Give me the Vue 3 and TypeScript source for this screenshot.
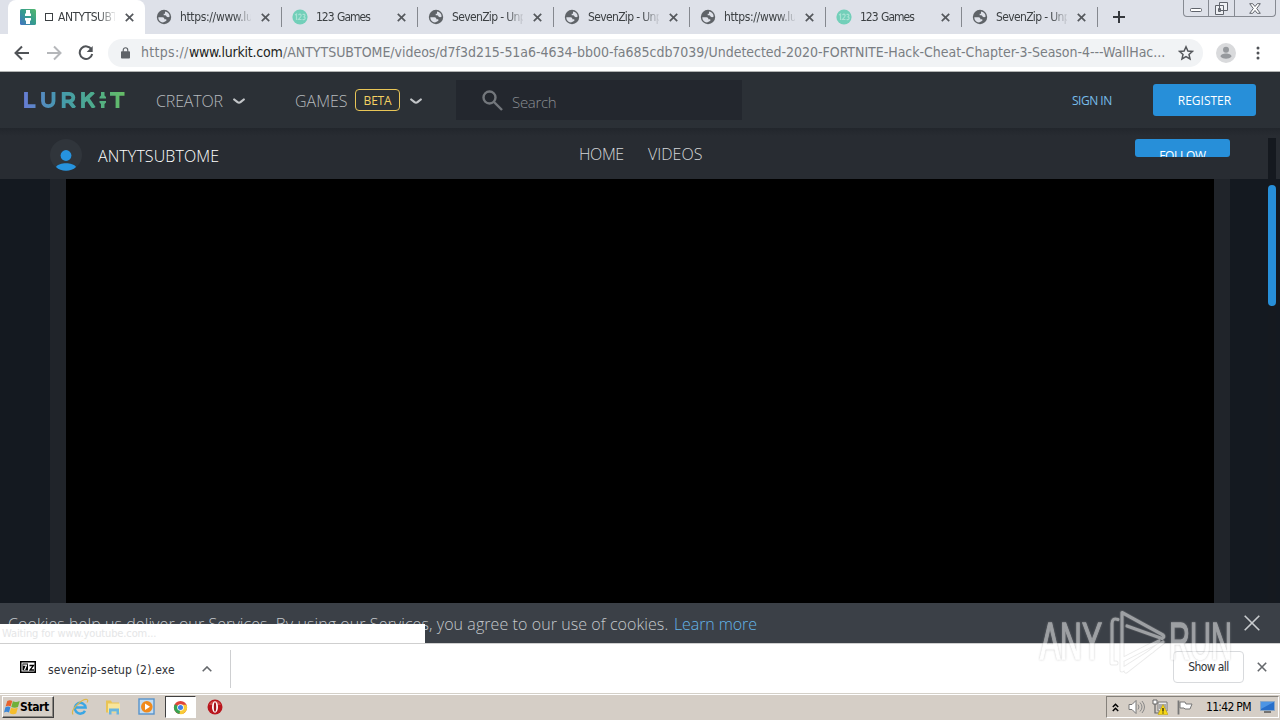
<template>
  <div class="desktop">
    <div class="tab-strip">
      <div v-for="(tab, i) in tabs" :key="i" class="tab" :class="[tab.kind, { active: i === 0 }]">
        <svg v-if="tab.icon === 'lurkit'" class="favicon" viewBox="0 0 16 16">
          <defs>
            <linearGradient id="fav" x1="0" y1="1" x2="1" y2="0">
              <stop offset="0" stop-color="#4472c4" />
              <stop offset=".5" stop-color="#369c8e" />
              <stop offset="1" stop-color="#54b86c" />
            </linearGradient>
          </defs>
          <rect width="16" height="16" rx="1.5" fill="url(#fav)" />
          <path d="M6 1h4v3l1 1v2H5V5l1-1zM5 9h6v2l-1 1v3H6v-3l-1-1z" fill="#fff" />
        </svg>
        <svg v-else-if="tab.icon === 'globe'" class="favicon" viewBox="0 0 16 16">
          <circle cx="8" cy="8" r="7.200" fill="#5f6368" />
          <path d="M2.300 8.300h4.200c1.500.2 2 1 1.800 2h2v1.700c-1.500.3-1.800 1-3.300 1.500C4 13.200 2.200 11 2.300 8.300z" fill="#dee1e9" />
          <path d="M9 2.500c2.500.3 4.500 2.300 4.700 5-1 .9-2 .9-3 .3-.5-1.300-1.200-1.600-3-1.500V4.800H9z" fill="#dee1e9" />
        </svg>
        <svg v-else class="favicon" viewBox="0 0 16 16">
          <circle cx="8" cy="8" r="7.600" fill="#72cfb9" />
          <path d="M3 6l1.500-1v6M6.500 6c2-2 3.500 0 2 2l-2 2.500h3M10.500 5.500c3-1 3 2 1 2.300 2.500.2 2 3.500-1 2.700" fill="none" stroke="#a9e2d4" stroke-width="1.200" />
        </svg>
        <span class="tab-title"><i v-if="i === 0" class="box-glyph"></i>{{ tab.title }}</span>
        <svg class="tab-close" viewBox="0 0 8 8"><path d="M.7.7l6.600 6.600M7.300.7L.7 7.300" /></svg>
      </div>
      <svg class="new-tab" viewBox="0 0 12 12"><path d="M6 0v12M0 6h12" /></svg>
      <div class="window-buttons">
        <span class="win-btn"><svg width="13" height="6" viewBox="0 0 13 6"><rect x=".5" y="1.500" width="11" height="3" rx="1" fill="#fff" stroke="#60646c" /></svg></span>
        <span class="win-btn"><svg width="13" height="13" viewBox="0 0 13 13"><path d="M4.500.5h8v8h-8zM.5 3.500h8v9h-8zM3.500 6.500h2v3h-2z" fill="#eef0f4" stroke="#60646c" /></svg></span>
        <span class="win-btn wide"><svg width="12" height="11" viewBox="0 0 12 11"><path d="M.7.7h3L6 3.500 8.300.7h3L7.700 5.500l3.600 4.800h-3L6 7.500l-2.300 2.800h-3l3.600-4.800z" fill="#fff" stroke="#60646c" /></svg></span>
      </div>
    </div>

    <div class="toolbar">
      <svg class="nav-icon" viewBox="0 0 16 16"><path d="M15 8H2M8 1.500L1.500 8 8 14.500" /></svg>
      <svg class="nav-icon dim" viewBox="0 0 16 16"><path d="M1 8h13M8 1.500L14.500 8 8 14.500" /></svg>
      <svg class="nav-icon" viewBox="0 0 16 16"><path d="M13.500 4.500A6.300 6.300 0 1 0 14.200 9" /><path d="M14.700 1v6h-6z" class="solid" /></svg>
      <div class="omnibox">
        <svg class="lock" viewBox="0 0 10 13"><rect y="4.500" width="10" height="8" rx="1" fill="#5f6368" /><path d="M2.500 5V3.200a2.500 2.500 0 0 1 5 0V5" fill="none" stroke="#5f6368" stroke-width="1.300" /></svg>
        <div class="url">
          <span class="scheme">https://</span><span class="host">www.lurkit.com</span><span class="path">{{ urlPath }}</span>
        </div>
        <svg class="star" viewBox="0 0 16 16"><path d="M8 1.800l1.900 4.200 4.500.4-3.400 3 1 4.500L8 11.500l-4 2.400 1-4.500-3.400-3 4.500-.4z" /></svg>
      </div>
      <svg class="avatar" viewBox="0 0 20 20"><circle cx="10" cy="10" r="10" fill="#d9dadc" /><circle cx="10" cy="6.800" r="3" fill="#96999d" /><path d="M4.500 13.500c0-4 11-4 11 0-2.500 3-8.500 3-11 0z" fill="#96999d" /></svg>
      <svg class="kebab" viewBox="0 0 4 14"><circle cx="2" cy="2" r="1.500" /><circle cx="2" cy="7" r="1.500" /><circle cx="2" cy="12" r="1.500" /></svg>
    </div>

    <div class="page">
      <header class="site-header">
        <svg class="logo" viewBox="0 0 101 16">
          <defs>
            <linearGradient id="brand" gradientUnits="userSpaceOnUse" x1="0" y1="0" x2="101" y2="0">
              <stop offset="0" stop-color="#667dd4" />
              <stop offset=".35" stop-color="#4499ad" />
              <stop offset=".7" stop-color="#4eac8b" />
              <stop offset="1" stop-color="#66bd65" />
            </linearGradient>
          </defs>
          <g fill="none" stroke="url(#brand)" stroke-width="3.800">
            <path d="M2 0v14.100h9.500" />
            <path d="M19 0v9c0 6.800 10.500 6.800 10.500 0V0" />
            <path d="M39.700 16V1.900h5.500c5.500 0 5.500 7.400 0 7.400h-5.500M45 9l5.500 7" />
            <path d="M59 0v16M69.500 0L60 9M63.500 6.500L70 16" />
            <path d="M86 1.900h14.500M93.500 1v15" />
          </g>
          <path d="M77 0h3.500v3.500l1.500 1.500v1.500h-6.500V5L77 3.500zM75.500 9H82v1.500L80.500 12v4H77v-4l-1.500-1.500z" fill="url(#brand)" />
        </svg>
        <span class="menu creator">CREATOR</span>
        <svg class="chevron" viewBox="0 0 12 7"><path d="M1.200 1.500L4.500 4.200q1.500 1 3 0l3.300-2.700" /></svg>
        <span class="menu games">GAMES</span>
        <span class="beta">BETA</span>
        <svg class="chevron" viewBox="0 0 12 7"><path d="M1.200 1.500L4.500 4.200q1.500 1 3 0l3.300-2.700" /></svg>
        <div class="search">
          <svg class="search-icon" viewBox="0 0 21 21"><circle cx="7.500" cy="7.500" r="6" /><path d="M12 12l8 8" /></svg>
          <span>Search</span>
        </div>
        <span class="sign-in">SIGN IN</span>
        <span class="register">REGISTER</span>
      </header>

      <div class="channel-bar">
        <svg class="channel-avatar" viewBox="0 0 32 32">
          <circle cx="16" cy="16" r="16" fill="#30353b" />
          <circle cx="16" cy="16.500" r="5.400" fill="#2693de" />
          <path d="M6 28c3-5 17-5 20 0-5 5-15 5-20 0z" fill="#2693de" />
        </svg>
        <span class="channel-name">ANTYTSUBTOME</span>
        <nav class="channel-nav"><span class="home">HOME</span><span class="videos">VIDEOS</span></nav>
        <span class="follow">FOLLOW</span>
      </div>

      <main class="content">
        <div class="player"></div>
      </main>

      <div class="cookie-bar">
        <span class="cookie-text">Cookies help us deliver our Services. By using our Services, you agree to our use of cookies.</span>
        <span class="learn">Learn more</span>
        <svg class="cookie-close" viewBox="0 0 16 16"><path d="M.7.7l14.600 14.600M15.300.7L.7 15.300" /></svg>
      </div>

      <div class="scroll-track"><div class="scroll-thumb"></div></div>
      <div class="status-bubble"><span>Waiting for www.youtube.com...</span></div>
    </div>

    <div class="downloads">
      <svg class="file-icon" viewBox="0 0 16 12"><rect x=".75" y=".75" width="14.500" height="10.500" fill="#fff" stroke="#000" stroke-width="1.500" /><path d="M2.500 2.500h5.500v7H2.500z" /><path d="M3.200 4.200h3.300L4.500 9" fill="none" stroke="#fff" stroke-width="1.200" /><path d="M9.500 4.500h4L10 9h4" fill="none" stroke="#000" stroke-width="1.300" /></svg>
      <span class="file-name">sevenzip-setup (2).exe</span>
      <svg class="file-arrow" viewBox="0 0 10 6"><path d="M.7 5.300L5 1l4.300 4.300" /></svg>
      <span class="shelf-line"></span>
      <span class="show-all">Show all</span>
      <svg class="shelf-close" viewBox="0 0 10 10"><path d="M.8.8l8.400 8.400M9.200.8L.8 9.200" /></svg>
    </div>

    <div class="taskbar">
      <div class="start">
        <svg viewBox="0 0 16 16">
          <path d="M3.300 2c2-1.300 3.500-1 5 0L6.600 7.500c-2-1-3-1-5 0z" fill="#e8622c" />
          <path d="M8.900 2.300c2 1 4 1 6.800-.2L14 8c-2 1-4.500 1-6.700 0z" fill="#70b03a" />
          <path d="M1.400 8.200c2-1 3.300-1 5 0L5 13.500c-2-1-3-1-5 0z" fill="#3d87d6" />
          <path d="M7.100 8.700c2 1 4 1 6.700 0L12.200 14.500c-2 1-4.500 1-6.700-.5z" fill="#f5bd2c" />
        </svg>
        <span>Start</span>
      </div>
      <svg class="quick ie" viewBox="0 0 18 18">
        <path d="M14 12.800A5.400 5.400 0 1 1 14.600 9.600H5" fill="none" stroke="#3aa6e4" stroke-width="2.500" />
        <path d="M2 16.500C-1 12 11 .5 16 1.500c1.200.5.800 1.800 0 3" fill="none" stroke="#dcb74a" stroke-width="1.200" />
      </svg>
      <svg class="quick folder" viewBox="0 0 18 18">
        <path d="M2 2.500h5l1 2h7v10H2z" fill="#e9c455" />
        <path d="M4 5.500h12v9H4z" fill="#f8e59a" />
        <path d="M5 16.500v-6h10v6h-2.500v-3h-5v3z" fill="#68b5df" />
      </svg>
      <svg class="quick media" viewBox="0 0 18 18">
        <rect x="1" y="1" width="15" height="15" fill="#c2dcf2" stroke="#5793cb" stroke-width="1.400" />
        <circle cx="8.800" cy="8.800" r="5.800" fill="#f08a1c" />
        <path d="M7 5.500l5 3.300-5 3.300z" fill="#fff" />
      </svg>
      <div class="running">
        <svg viewBox="0 0 16 16">
          <circle cx="8" cy="8" r="7" fill="#e0443a" />
          <path d="M8 8L2 4.400A7 7 0 0 0 7 15l3-5z" fill="#36a351" />
          <path d="M8 8l-1 7A7 7 0 0 0 14.300 5H8z" fill="#f8cb38" />
          <circle cx="8" cy="8" r="3.500" fill="#fff" />
          <circle cx="8" cy="8" r="2.700" fill="#3f80e8" />
        </svg>
      </div>
      <svg class="quick opera" viewBox="0 0 16 16">
        <circle cx="8" cy="8" r="7.500" fill="#b9161d" />
        <path d="M2 6a6.500 6.500 0 0 1 12 0" fill="#d04a48" />
        <ellipse cx="8" cy="8" rx="3" ry="5.800" fill="#fff" />
        <ellipse cx="8" cy="8" rx="1.200" ry="4.800" fill="#a3141a" />
      </svg>
      <div class="tray">
        <svg class="more" viewBox="0 0 7 9"><path d="M.8 4l2.700-2.700L6.200 4M.8 8l2.700-2.700L6.200 8" fill="none" stroke="#000" stroke-width="1.500" /></svg>
        <svg class="volume" viewBox="0 0 17 14"><path d="M1 4.500h3l4-4v13l-4-4H1z" fill="#fff" stroke="#777" /><path d="M10 4.500q2 2.500 0 5M12 2.500q4 4.500 0 9M14 1q5 6 0 12" fill="none" stroke="#888" /></svg>
        <svg class="network" viewBox="0 0 16 16"><path d="M6 3h9v9H6z" fill="#ededed" stroke="#777" /><path d="M7 5h7v5H7z" fill="#aaa" /><path d="M1 1h4v4H1z" fill="#fff" stroke="#666" /><path d="M3 5v9h4" fill="none" stroke="#666" stroke-width="1.200" /><path d="M11 5.500l5 10H6z" fill="#f7d714" stroke="#bd9d00" stroke-width=".5" /><path d="M11 9v3.500M11 13.500v1" stroke="#111" stroke-width="1.200" /></svg>
        <svg class="flag" viewBox="0 0 16 15"><path d="M1.500.5v14" stroke="#777" stroke-width="1.800" /><path d="M3 2h5l1 2h6l-2 5H8L7 8H3z" fill="#fff" stroke="#777" /></svg>
        <span class="clock">11:42 PM</span>
        <svg class="screen" viewBox="0 0 15 12"><path d="M.5.5h14v9H.5z" fill="#286fca" stroke="#8aa7c6" /><path d="M1 1h13L1 8z" fill="#4d95e4" /><path d="M4 11h7" stroke="#555" stroke-width="1.500" /></svg>
      </div>
    </div>

    <svg class="watermark" viewBox="0 0 200 66">
      <g class="mark-text">
        <text x="2" y="51" textLength="62" lengthAdjust="spacingAndGlyphs">ANY</text>
        <text x="131" y="51" textLength="63" lengthAdjust="spacingAndGlyphs">RUN</text>
      </g>
      <g class="mark-play">
        <path v-for="layer in ['edge', 'face']" :key="layer" :class="layer" d="M80 11.500q-6-2-6 4V55h4M84 53V4.500L125 27q2 2-1 3.500L89 18M84 52l37-19M88 63l37-29M84 53v9l30-19" />
      </g>
    </svg>
  </div>
</template>

<script setup lang="ts">
interface Tab {
  title: string
  icon: 'lurkit' | 'globe' | 'games'
  kind: string
}

const tabs: Tab[] = [
  { title: 'ANTYTSUBTOME', icon: 'lurkit', kind: 'channel' },
  { title: 'https://www.lurkit.com', icon: 'globe', kind: 'link' },
  { title: '123 Games', icon: 'games', kind: 'games-tab' },
  { title: 'SevenZip - Unpack', icon: 'globe', kind: 'zip' },
  { title: 'SevenZip - Unpack', icon: 'globe', kind: 'zip' },
  { title: 'https://www.lurkit.com', icon: 'globe', kind: 'link' },
  { title: '123 Games', icon: 'games', kind: 'games-tab' },
  { title: 'SevenZip - Unpack', icon: 'globe', kind: 'zip' },
]

const urlPath =
  '/ANTYTSUBTOME/videos/d7f3d215-51a6-4634-bb00-fa685cdb7039/Undetected-2020-FORTNITE-Hack-Cheat-Chapter-3-Season-4---WallHac...'
</script>

<style>
body {
  margin: 0;
  overflow: hidden;
}
</style>

<style scoped>
.desktop {
  position: relative;
  display: flex;
  flex-direction: column;
  width: 1280px;
  height: 720px;
  overflow: hidden;
  font-family: "DejaVu Sans Condensed", "DejaVu Sans", sans-serif;
  font-stretch: condensed;
  background: #fff;
}
svg {
  display: block;
  flex: none;
}
span {
  white-space: nowrap;
}
.tab-strip {
  display: flex;
  height: 34px;
  flex: none;
  padding-left: 8px;
  background: #dee1e9;
}
.tab {
  box-sizing: border-box;
  display: flex;
  align-items: center;
  width: 136px;
  height: 34px;
  padding-left: 12px;
  flex: none;
  font-size: 12px;
  color: #3c4043;
}
.tab.active {
  width: 137px;
  margin-right: -1px;
  background: #fff;
  border-radius: 8px 8px 0 0;
}
.tab:not(.active)::after {
  content: "";
  flex: none;
  width: 1px;
  height: 20px;
  margin-left: 11px;
  background: #85888f;
}
.favicon {
  width: 16px;
  height: 16px;
}
.tab-title {
  flex: none;
  width: 71px;
  margin: 0 8px;
  overflow: hidden;
  letter-spacing: -0.35px;
  -webkit-mask-image: linear-gradient(90deg, #000 54px, transparent 73px);
  mask-image: linear-gradient(90deg, #000 54px, transparent 73px);
}
.zip .tab-title {
  letter-spacing: -0.65px;
}
.games-tab .tab-title {
  letter-spacing: -1px;
  word-spacing: 1px;
}
.channel .tab-title {
  letter-spacing: -0.5px;
}
.box-glyph {
  display: inline-block;
  width: 6px;
  height: 6px;
  margin: 0 5px 0 1px;
  border: 1px solid #3c4043;
}
.tab-close {
  width: 9px;
  height: 9px;
  margin-left: 2px;
}
.tab-close path {
  stroke: #55585d;
  stroke-width: 1.5;
}
.new-tab {
  width: 12px;
  height: 12px;
  margin: 11px 0 0 17px;
}
.new-tab path {
  stroke: #35383d;
  stroke-width: 2;
}
.window-buttons {
  box-sizing: border-box;
  display: flex;
  width: 93px;
  height: 17px;
  margin-left: 58px;
  border: 1px solid #868a92;
  border-top: 0;
  border-radius: 0 0 4px 4px;
}
.win-btn {
  display: flex;
  align-items: center;
  justify-content: center;
  width: 25px;
  border-right: 1px solid #868a92;
}
.win-btn:first-child {
  padding-top: 4px;
  height: 12px;
}
.win-btn.wide {
  width: 41px;
  border: 0;
}
.toolbar {
  box-sizing: border-box;
  display: flex;
  align-items: center;
  height: 38px;
  flex: none;
  padding-left: 14px;
  border-bottom: 1px solid #b2b4b3;
}
.nav-icon {
  width: 16px;
  height: 16px;
  margin-right: 16px;
}
.nav-icon path {
  fill: none;
  stroke: #505357;
  stroke-width: 2;
}
.nav-icon.dim path {
  stroke: #b5b7ba;
}
.nav-icon .solid {
  fill: #505357;
  stroke: none;
}
.omnibox {
  display: flex;
  align-items: center;
  width: 1095px;
  height: 28px;
  margin-left: -2px;
  border-radius: 14px;
  background: #f1f3f5;
}
.lock {
  width: 9px;
  height: 12px;
  margin: 0 11px 0 13px;
}
.url {
  display: flex;
  width: 1025px;
  margin-top: -2px;
  font-size: 14px;
  color: #7a7e83;
}
.scheme {
  width: 48px;
  letter-spacing: 0.3px;
}
.host {
  width: 94px;
  letter-spacing: -0.25px;
  color: #1d1f22;
}
.path {
  letter-spacing: -0.025px;
}
.star {
  width: 16px;
  height: 16px;
  margin-left: 12px;
}
.star path {
  fill: none;
  stroke: #54575b;
  stroke-width: 1.5;
}
.avatar {
  width: 20px;
  height: 20px;
  margin-left: 13px;
}
.kebab {
  width: 4px;
  height: 14px;
  margin-left: 20px;
  fill: #505357;
}
.page {
  position: relative;
  height: 571px;
  flex: none;
  background: #141920;
  font-family: "Open Sans", "Noto Sans", sans-serif;
  font-stretch: normal;
  font-weight: 300;
}
.site-header {
  box-sizing: border-box;
  display: flex;
  align-items: center;
  height: 56px;
  padding-left: 24px;
  background: #2b3036;
  color: #b6babe;
  font-size: 16px;
}
.logo {
  width: 101px;
  height: 16px;
}
.creator {
  width: 67px;
  margin: 2px 10px 0 31px;
  letter-spacing: -0.15px;
}
.games {
  width: 53px;
  margin: 2px 7px 0 50px;
}
.chevron {
  width: 12px;
  height: 7px;
  margin-top: 2px;
}
.chevron path {
  fill: none;
  stroke: #c2c5c8;
  stroke-width: 2.2;
  stroke-linecap: round;
}
.beta {
  box-sizing: border-box;
  width: 45px;
  height: 22px;
  margin-right: 10px;
  border: 1px solid #e8c557;
  border-radius: 4px;
  color: #f4d063;
  font-size: 12px;
  font-weight: 400;
  letter-spacing: -0.2px;
  line-height: 21px;
  text-align: center;
}
.search {
  display: flex;
  align-items: center;
  width: 286px;
  height: 40px;
  margin-left: 34px;
  background: #23272e;
  color: #8a8e93;
  font-size: 15px;
}
.search span {
  padding-top: 3px;
  letter-spacing: -0.3px;
}
.search-icon {
  width: 21px;
  height: 21px;
  margin: 0 9px 0 26px;
}
.search-icon * {
  fill: none;
  stroke: #73777c;
  stroke-width: 2.4;
}
.sign-in {
  width: 41px;
  margin-left: 330px;
  color: #78bdea;
  font-size: 12px;
  font-weight: 400;
  letter-spacing: -0.5px;
}
.register {
  width: 103px;
  height: 32px;
  margin-left: 40px;
  border-radius: 3px;
  background: #278fd9;
  color: #fff;
  font-size: 12px;
  font-weight: 400;
  line-height: 33px;
  text-align: center;
}
.channel-bar {
  box-sizing: border-box;
  display: flex;
  align-items: center;
  height: 51px;
  padding: 3px 0 0 50px;
  background: linear-gradient(#22262c, #282c32 8px);
  color: #d5d8da;
  font-size: 16px;
}
.channel-avatar {
  width: 32px;
  height: 32px;
}
.channel-name {
  width: 121px;
  margin: 2px 360px 0 16px;
  letter-spacing: 0.1px;
  color: #fff;
}
.channel-nav {
  display: flex;
  width: 556px;
  margin-top: -2px;
}
.home {
  width: 69px;
  letter-spacing: -0.4px;
}
.follow {
  display: block;
  align-self: flex-start;
  width: 95px;
  height: 18px;
  margin-top: 8px;
  overflow: hidden;
  border-radius: 3px;
  background: #278fd9;
  color: #fff;
  font-size: 12px;
  font-weight: 400;
  letter-spacing: -0.3px;
  line-height: 34px;
  text-align: center;
}
.content {
  width: 1148px;
  height: 424px;
  margin-left: 50px;
  padding: 0 16px;
  background: #20242a;
}
.player {
  height: 424px;
  background: #000;
}
.cookie-bar {
  box-sizing: border-box;
  display: flex;
  align-items: center;
  height: 40px;
  padding: 2px 0 0 8px;
  background: #3b4047;
  color: #c4c8cc;
  font-size: 16px;
}
.cookie-text {
  width: 666px;
  letter-spacing: 0.075px;
}
.learn {
  width: 83px;
  color: #64b5e9;
  letter-spacing: -0.1px;
}
.cookie-close {
  width: 16px;
  height: 16px;
  margin: -2px 0 0 487px;
}
.cookie-close path {
  stroke: #c9cccf;
  stroke-width: 1.6;
}
.scroll-track {
  position: absolute;
  top: 66px;
  right: 4px;
  width: 8px;
  height: 465px;
  background: #15191f;
}
.scroll-thumb {
  height: 121px;
  margin-top: 47px;
  border-radius: 4px;
  background: #278fd9;
}
.status-bubble {
  position: absolute;
  bottom: 0;
  left: 0;
  width: 423px;
  height: 19px;
  padding-left: 2px;
  background: #fff;
  color: #e5e6e7;
  font-family: "DejaVu Sans Condensed", "DejaVu Sans", sans-serif;
  font-stretch: condensed;
  font-size: 11px;
  font-weight: 400;
  letter-spacing: -0.12px;
  line-height: 20px;
}
.downloads {
  box-sizing: border-box;
  display: flex;
  align-items: center;
  height: 50px;
  flex: none;
  padding-left: 20px;
  border-top: 1px solid #cfcfcf;
  background: #fff;
  color: #303236;
  font-size: 12px;
}
.file-icon {
  width: 16px;
  height: 12px;
  margin-bottom: 3px;
}
.file-name {
  width: 127px;
  margin: 2px 27px 0 12px;
  letter-spacing: 0.17px;
}
.file-arrow {
  width: 10px;
  height: 6px;
}
.file-arrow path,
.shelf-close path {
  fill: none;
  stroke: #65686c;
  stroke-width: 1.6;
}
.shelf-line {
  width: 1px;
  height: 38px;
  margin-left: 18px;
  background: #cecfd1;
}
.show-all {
  box-sizing: border-box;
  width: 71px;
  height: 32px;
  margin: -3px 13px 0 942px;
  border: 1px solid #d8dadd;
  border-radius: 4px;
  letter-spacing: -0.6px;
  line-height: 30px;
  text-align: center;
}
.shelf-close {
  width: 10px;
  height: 10px;
  margin-top: -3px;
}
.taskbar {
  box-sizing: border-box;
  display: flex;
  align-items: center;
  height: 27px;
  flex: none;
  padding: 0 0 0 2px;
  border-top: 1px solid #d4d0c8;
  background: #d5cec6;
  box-shadow: inset 0 1px #fff;
}
.start {
  box-sizing: border-box;
  display: flex;
  align-items: center;
  width: 52px;
  height: 22px;
  padding-left: 1px;
  border: 1px solid;
  border-color: #fff #404040 #404040 #fff;
  box-shadow: inset -1px -1px #8c8882;
  font-size: 12px;
  font-weight: 700;
  letter-spacing: -0.4px;
}
.start svg {
  width: 16px;
  height: 16px;
}
.start span {
  color: #000;
}
.quick {
  width: 18px;
  height: 18px;
}
.ie {
  margin-left: 17px;
}
.folder {
  margin-left: 15px;
}
.media {
  margin-left: 16px;
}
.running {
  box-sizing: border-box;
  display: flex;
  align-items: center;
  justify-content: center;
  width: 31px;
  height: 22px;
  margin-left: 9px;
  border: 1px solid;
  border-color: #404040 #fff #fff #404040;
  background: #fff;
}
.running svg {
  width: 15px;
  height: 15px;
}
.opera {
  width: 16px;
  height: 16px;
  margin-left: 11px;
}
.tray {
  box-sizing: border-box;
  display: flex;
  align-items: center;
  width: 173px;
  height: 22px;
  margin-left: 883px;
  padding-left: 5px;
  border: 1px solid;
  border-color: #85817b #fff #fff #85817b;
  font-size: 12px;
}
.more {
  width: 7px;
  height: 9px;
}
.volume {
  width: 17px;
  height: 14px;
  margin-left: 9px;
}
.network {
  width: 16px;
  height: 16px;
  margin-left: 7px;
}
.flag {
  width: 16px;
  height: 15px;
  margin-left: 9px;
}
.clock {
  width: 45px;
  margin-left: 13px;
  letter-spacing: -0.7px;
}
.screen {
  width: 15px;
  height: 12px;
  margin-left: 9px;
}
.watermark {
  position: absolute;
  top: 608px;
  left: 1038px;
  width: 200px;
  height: 66px;
}
.mark-text,
.mark-play {
  opacity: 0.5;
}
.mark-text text {
  fill: #fff;
  stroke: #fff;
  stroke-width: 1.3;
  filter: drop-shadow(0 0 1px #999);
  font-family: "Liberation Sans", Arial, sans-serif;
  font-size: 51px;
}
.mark-play path {
  fill: none;
  stroke-linejoin: round;
  stroke-linecap: round;
}
.mark-play .edge {
  stroke: rgba(150, 150, 150, 0.4);
  stroke-width: 5;
}
.mark-play .face {
  stroke: #fff;
  stroke-width: 3.2;
}
</style>
